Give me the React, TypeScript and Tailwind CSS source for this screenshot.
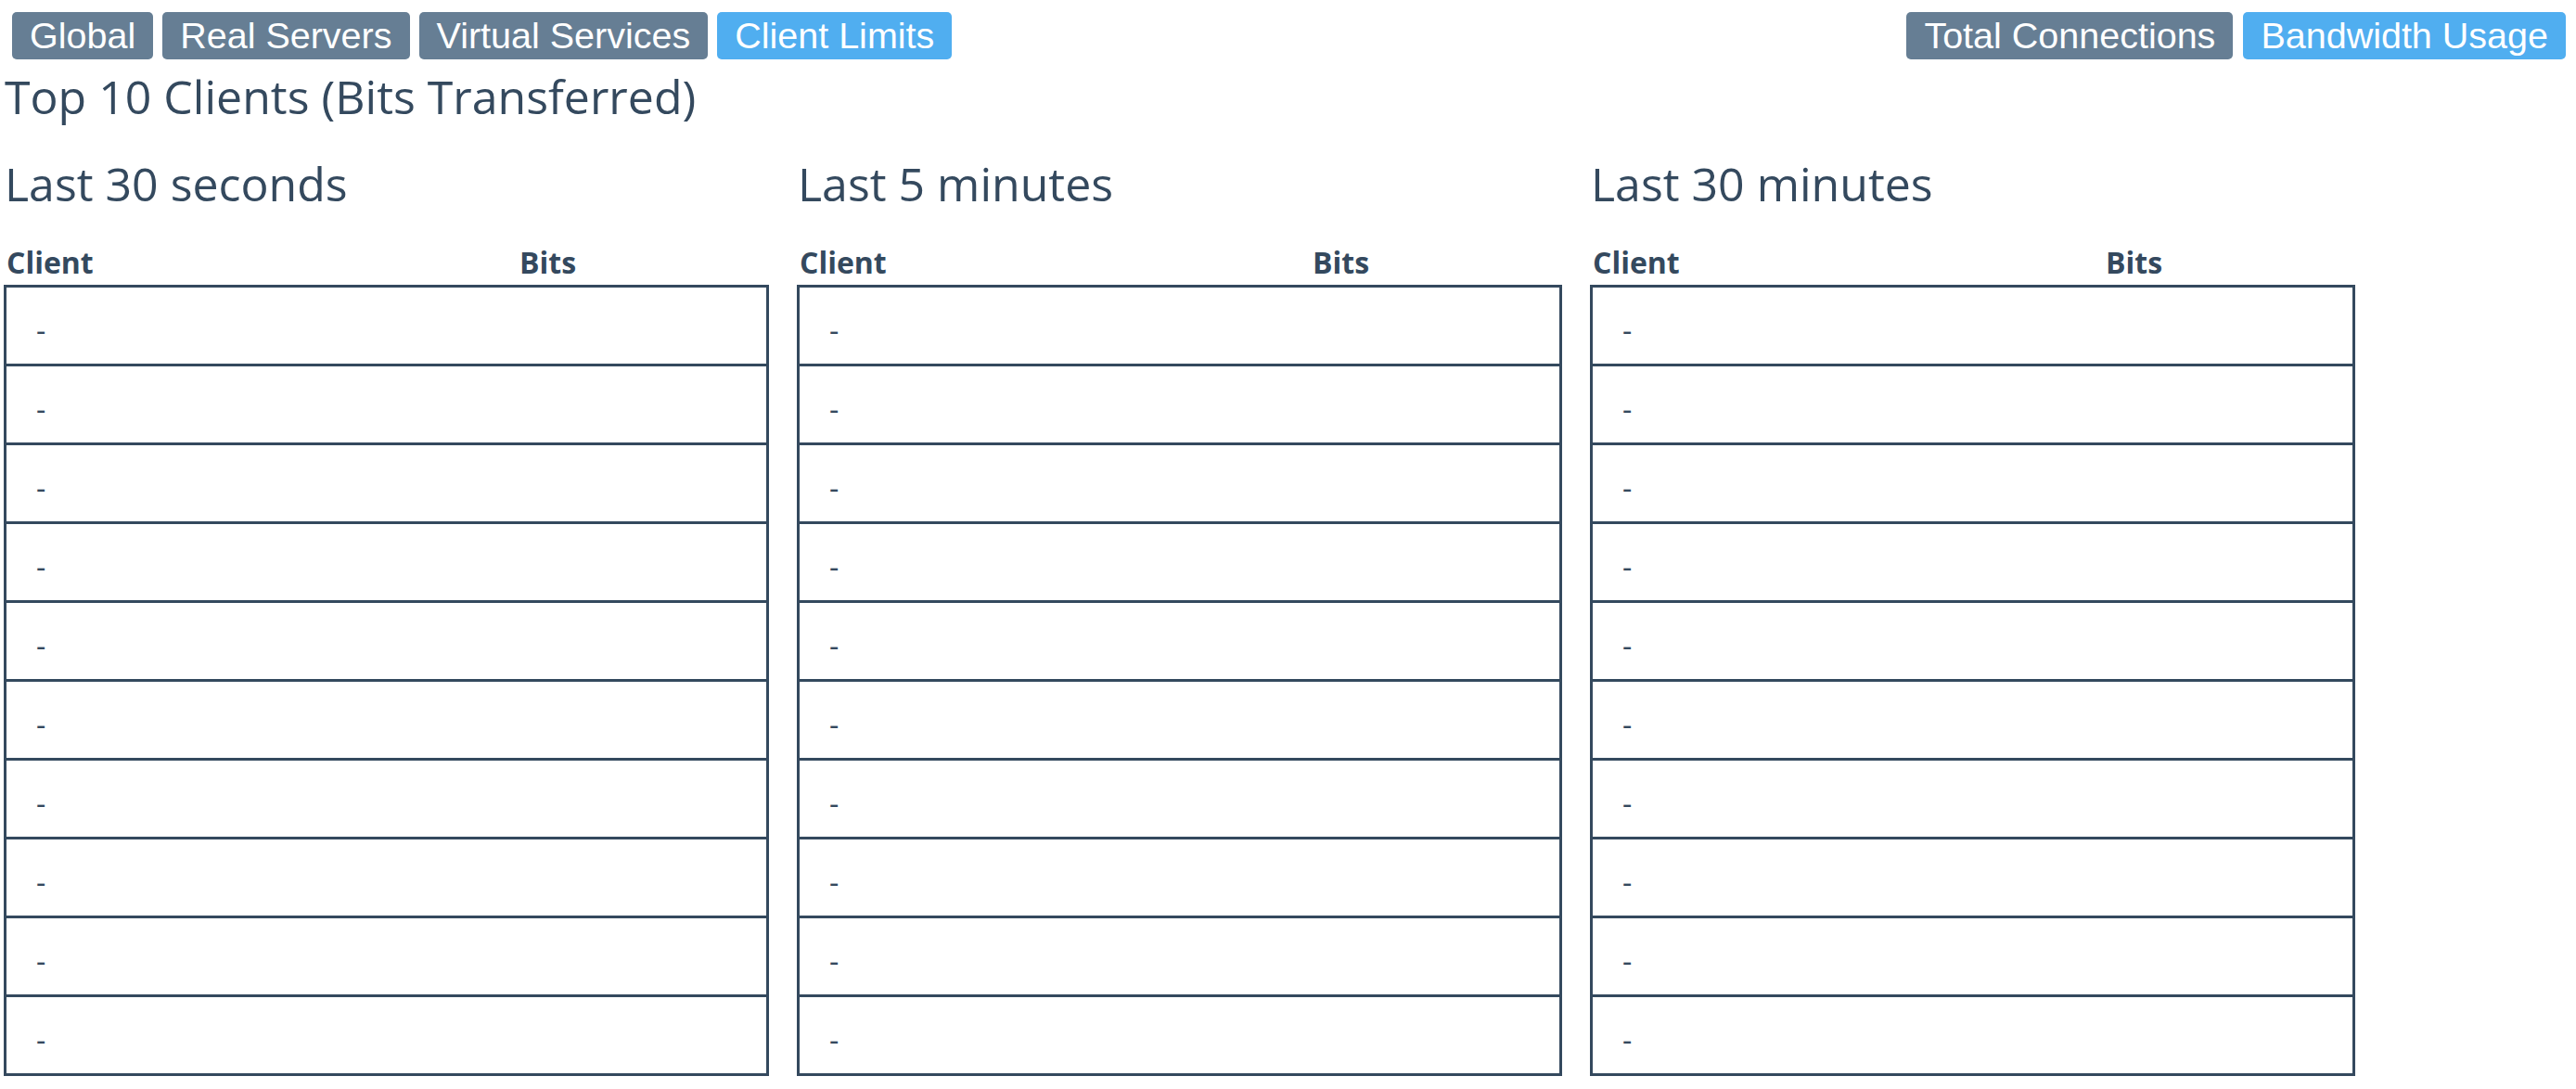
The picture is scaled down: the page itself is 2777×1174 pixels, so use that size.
const TABS = ['Global', 'Real Servers', 'Virtual Services', 'Client Limits']
const VIEWS = ['Total Connections', 'Bandwidth Usage']
const PERIODS = ['Last 30 seconds', 'Last 5 minutes', 'Last 30 minutes']

function Tab({ label, active }: { label: string; active?: boolean }) {
  return (
    <button
      className={
        'h-[51px] rounded-[5px] px-[19px] font-["Liberation_Sans",Arial,sans-serif] text-[39.5px] leading-none text-white ' +
        (active ? 'bg-[#50aef0]' : 'bg-[#667e94]')
      }
    >
      {label}
    </button>
  )
}

function ClientTable({ title }: { title: string }) {
  const rows = Array.from({ length: 10 }, (_, i) => i)
  return (
    <div className="w-[825px] shrink-0">
      <h2 className="pl-[1px] text-[50px] leading-[68px] font-normal">{title}</h2>
      {/* column headers */}
      <div className="mt-[29px] grid grid-cols-[348px_1fr] text-[32px] leading-[44px] font-bold">
        <span className="pl-[3px]">Client</span>
        <span className="text-center">Bits</span>
      </div>
      <div className="mt-[2px] border-[3px] border-[#34495e]">
        {rows.map((i) => (
          <div
            key={i}
            className={
              'box-content h-[58px] pl-[32px] pt-[24px] text-[32px] leading-[44px] ' +
              (i > 0 ? 'border-t-[3px] border-[#34495e]' : '')
            }
          >
            -
          </div>
        ))}
      </div>
    </div>
  )
}

export default function App() {
  return (
    <div className="min-h-screen bg-white font-['Open_Sans','Noto_Sans',sans-serif] text-[#34495e]">
      <div className="flex items-start justify-between pl-[13px] pr-[11px] pt-[13px]">
        <div className="flex gap-[10px]">
          {TABS.map((t) => (
            <Tab key={t} label={t} active={t === 'Client Limits'} />
          ))}
        </div>
        <div className="flex gap-[11px]">
          {VIEWS.map((v) => (
            <Tab key={v} label={v} active={v === 'Bandwidth Usage'} />
          ))}
        </div>
      </div>

      <h1 className="mt-[6px] pl-[5px] text-[50px] leading-[68px] font-normal">
        Top 10 Clients (Bits Transferred)
      </h1>

      <div className="mt-[26px] flex gap-[30px] pl-[4px]">
        {PERIODS.map((p) => (
          <ClientTable key={p} title={p} />
        ))}
      </div>
    </div>
  )
}
